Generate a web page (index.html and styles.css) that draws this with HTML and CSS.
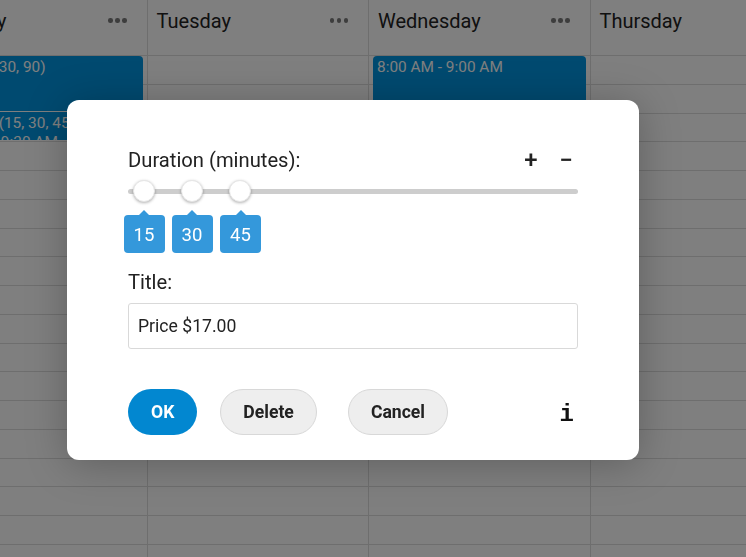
FILE: index.html
```html
<!DOCTYPE html>
<html>
<head>
<meta charset="utf-8">
<link rel="stylesheet" href="styles.css">
</head>
<body>
<div class="calendar">
  <div class="col">
    <div class="col-head"><span class="day">Monday</span><span class="dots"><i></i><i></i><i></i></span></div>
    <div class="col-body">
      <div class="row"></div><div class="row"></div><div class="row"></div><div class="row"></div><div class="row"></div><div class="row"></div>
      <div class="row"></div><div class="row"></div><div class="row"></div><div class="row"></div><div class="row"></div><div class="row"></div>
      <div class="row"></div><div class="row"></div><div class="row"></div><div class="row"></div><div class="row"></div><div class="row"></div>
      <div class="event ev-a">Yoga (15, 30, 90)</div>
      <div class="event ev-b">Massage (15, 30, 45)<br>9:00 AM - 9:30 AM</div>
    </div>
  </div>
  <div class="col">
    <div class="col-head"><span class="day">Tuesday</span><span class="dots"><i></i><i></i><i></i></span></div>
    <div class="col-body">
      <div class="row"></div><div class="row"></div><div class="row"></div><div class="row"></div><div class="row"></div><div class="row"></div>
      <div class="row"></div><div class="row"></div><div class="row"></div><div class="row"></div><div class="row"></div><div class="row"></div>
      <div class="row"></div><div class="row"></div><div class="row"></div><div class="row"></div><div class="row"></div><div class="row"></div>
    </div>
  </div>
  <div class="col">
    <div class="col-head"><span class="day">Wednesday</span><span class="dots"><i></i><i></i><i></i></span></div>
    <div class="col-body">
      <div class="row"></div><div class="row"></div><div class="row"></div><div class="row"></div><div class="row"></div><div class="row"></div>
      <div class="row"></div><div class="row"></div><div class="row"></div><div class="row"></div><div class="row"></div><div class="row"></div>
      <div class="row"></div><div class="row"></div><div class="row"></div><div class="row"></div><div class="row"></div><div class="row"></div>
      <div class="event ev-c">8:00 AM - 9:00 AM</div>
    </div>
  </div>
  <div class="col">
    <div class="col-head"><span class="day">Thursday</span><span class="dots"><i></i><i></i><i></i></span></div>
    <div class="col-body">
      <div class="row"></div><div class="row"></div><div class="row"></div><div class="row"></div><div class="row"></div><div class="row"></div>
      <div class="row"></div><div class="row"></div><div class="row"></div><div class="row"></div><div class="row"></div><div class="row"></div>
      <div class="row"></div><div class="row"></div><div class="row"></div><div class="row"></div><div class="row"></div><div class="row"></div>
    </div>
  </div>
</div>

<div class="overlay"></div>

<div class="dialog">
  <div class="field-head">
    <span class="label">Duration (minutes):</span>
    <span class="steppers"><button class="step">+</button><button class="step">−</button></span>
  </div>
  <div class="slider">
    <div class="track"></div>
    <div class="handle" style="left:15.5px"></div>
    <div class="handle" style="left:63.5px"></div>
    <div class="handle" style="left:112px"></div>
    <div class="tip" style="left:15.5px">15</div>
    <div class="tip" style="left:63.5px">30</div>
    <div class="tip" style="left:112px">45</div>
  </div>
  <div class="label">Title:</div>
  <input class="text-input" type="text" value="Price $17.00">
  <div class="actions">
    <button class="btn btn-primary">OK</button>
    <button class="btn btn-light btn-delete">Delete</button>
    <button class="btn btn-light btn-cancel">Cancel</button>
    <span class="info">i</span>
  </div>
</div>
</body>
</html>
```
FILE: styles.css
```css
html, body {
  margin: 0;
  padding: 0;
  background: #fff;
  overflow: hidden;
  width: 746px;
  height: 557px;
  font-family: Roboto, "Noto Sans", sans-serif;
}

.calendar {
  display: grid;
  grid-template-columns: repeat(4, 221.5px);
  margin-left: -74px;
}

.col {
  border-right: 1px solid #dcdcdc;
  box-sizing: border-box;
}

.col-head {
  height: 56px;
  box-sizing: border-box;
  border-bottom: 1px solid #dcdcdc;
  display: flex;
  align-items: center;
  justify-content: space-between;
  padding: 0 20px 14px 9px;
}

.day {
  font-size: 20px;
  color: #222;
}

.dots {
  display: flex;
  gap: 2.5px;
}

.dots i {
  width: 4.5px;
  height: 4.5px;
  border-radius: 50%;
  background: #7a7a7a;
}

.col-body {
  position: relative;
}

.row {
  height: 28.75px;
  box-sizing: border-box;
  border-bottom: 1px solid #dcdcdc;
}

.event {
  position: absolute;
  left: 4px;
  right: 4px;
  box-sizing: border-box;
  padding: 2px 4px;
  border-radius: 4px;
  background: #0094e0;
  color: #fff;
  font-size: 15.4px;
  line-height: 19px;
  white-space: nowrap;
  overflow: hidden;
}

.ev-a { top: 0; height: 55px; padding-left: 1px; }
.ev-b { top: 56px; height: 28px; border-radius: 0 0 4px 4px; padding-left: 2px; }
.ev-c { top: 0; height: 55px; }

.overlay {
  position: fixed;
  inset: 0;
  background: rgba(0, 0, 0, 0.5);
}

.dialog {
  position: absolute;
  left: 67px;
  top: 100px;
  width: 572px;
  height: 360px;
  box-sizing: border-box;
  padding: 48px 61px 25px;
  background: #fff;
  border-radius: 12px;
  box-shadow: 0 4px 40px rgba(0, 0, 0, 0.25);
}

.field-head {
  display: flex;
  justify-content: space-between;
  align-items: center;
  height: 24px;
}

.label {
  font-size: 20.2px;
  line-height: 24px;
  color: #222;
}

.steppers {
  display: flex;
  gap: 9px;
  margin-right: -1px;
}

.step {
  width: 26px;
  height: 26px;
  padding: 0;
  border: none;
  background: none;
  font-family: Roboto, sans-serif;
  font-size: 24px;
  font-weight: 500;
  line-height: 26px;
  color: #222;
}

.slider {
  position: relative;
  height: 98px;
}

.track {
  position: absolute;
  left: 0;
  right: 0;
  top: 17px;
  height: 5px;
  border-radius: 3px;
  background: #cdcdcd;
}

.handle {
  position: absolute;
  top: 8px;
  width: 22px;
  height: 22px;
  margin-left: -11px;
  box-sizing: border-box;
  border-radius: 50%;
  background: #fff;
  border: 1px solid #e6e6e6;
  box-shadow: 0 1px 3px rgba(0, 0, 0, 0.3);
}

.tip {
  position: absolute;
  top: 43px;
  width: 41px;
  height: 38px;
  margin-left: -20px;
  border-radius: 4px;
  background: #3498db;
  color: #fff;
  font-size: 18.5px;
  line-height: 40px;
  text-align: center;
}

.tip::before {
  content: "";
  position: absolute;
  left: 50%;
  top: -5px;
  margin-left: -5px;
  border-left: 5px solid transparent;
  border-right: 5px solid transparent;
  border-bottom: 5px solid #3498db;
}

.text-input {
  display: block;
  width: 100%;
  height: 46px;
  margin-top: 9px;
  box-sizing: border-box;
  padding: 0 9px;
  border: 1px solid #d9d9d9;
  border-radius: 3px;
  font-family: Roboto, sans-serif;
  font-size: 17.6px;
  color: #222;
  outline: none;
}

.actions {
  display: flex;
  align-items: center;
  margin-top: 40px;
}

.btn {
  height: 46px;
  padding: 0 23px;
  border-radius: 23px;
  font-family: Roboto, sans-serif;
  font-size: 17.6px;
  font-weight: 700;
  cursor: pointer;
}

.btn-primary {
  border: none;
  background: #0287d0;
  color: #fff;
}

.btn-light {
  border: 1px solid #d8d8d8;
  background: #eeeeee;
  color: #222;
  padding: 0 22px;
}

.btn-delete { margin-left: 23px; }
.btn-cancel { margin-left: 31px; }

.info {
  margin-left: auto;
  margin-right: 4px;
  padding-top: 5px;
  font-family: "Liberation Mono", "DejaVu Sans Mono", monospace;
  font-weight: 700;
  font-size: 24px;
  line-height: 24px;
  color: #111;
}
```
